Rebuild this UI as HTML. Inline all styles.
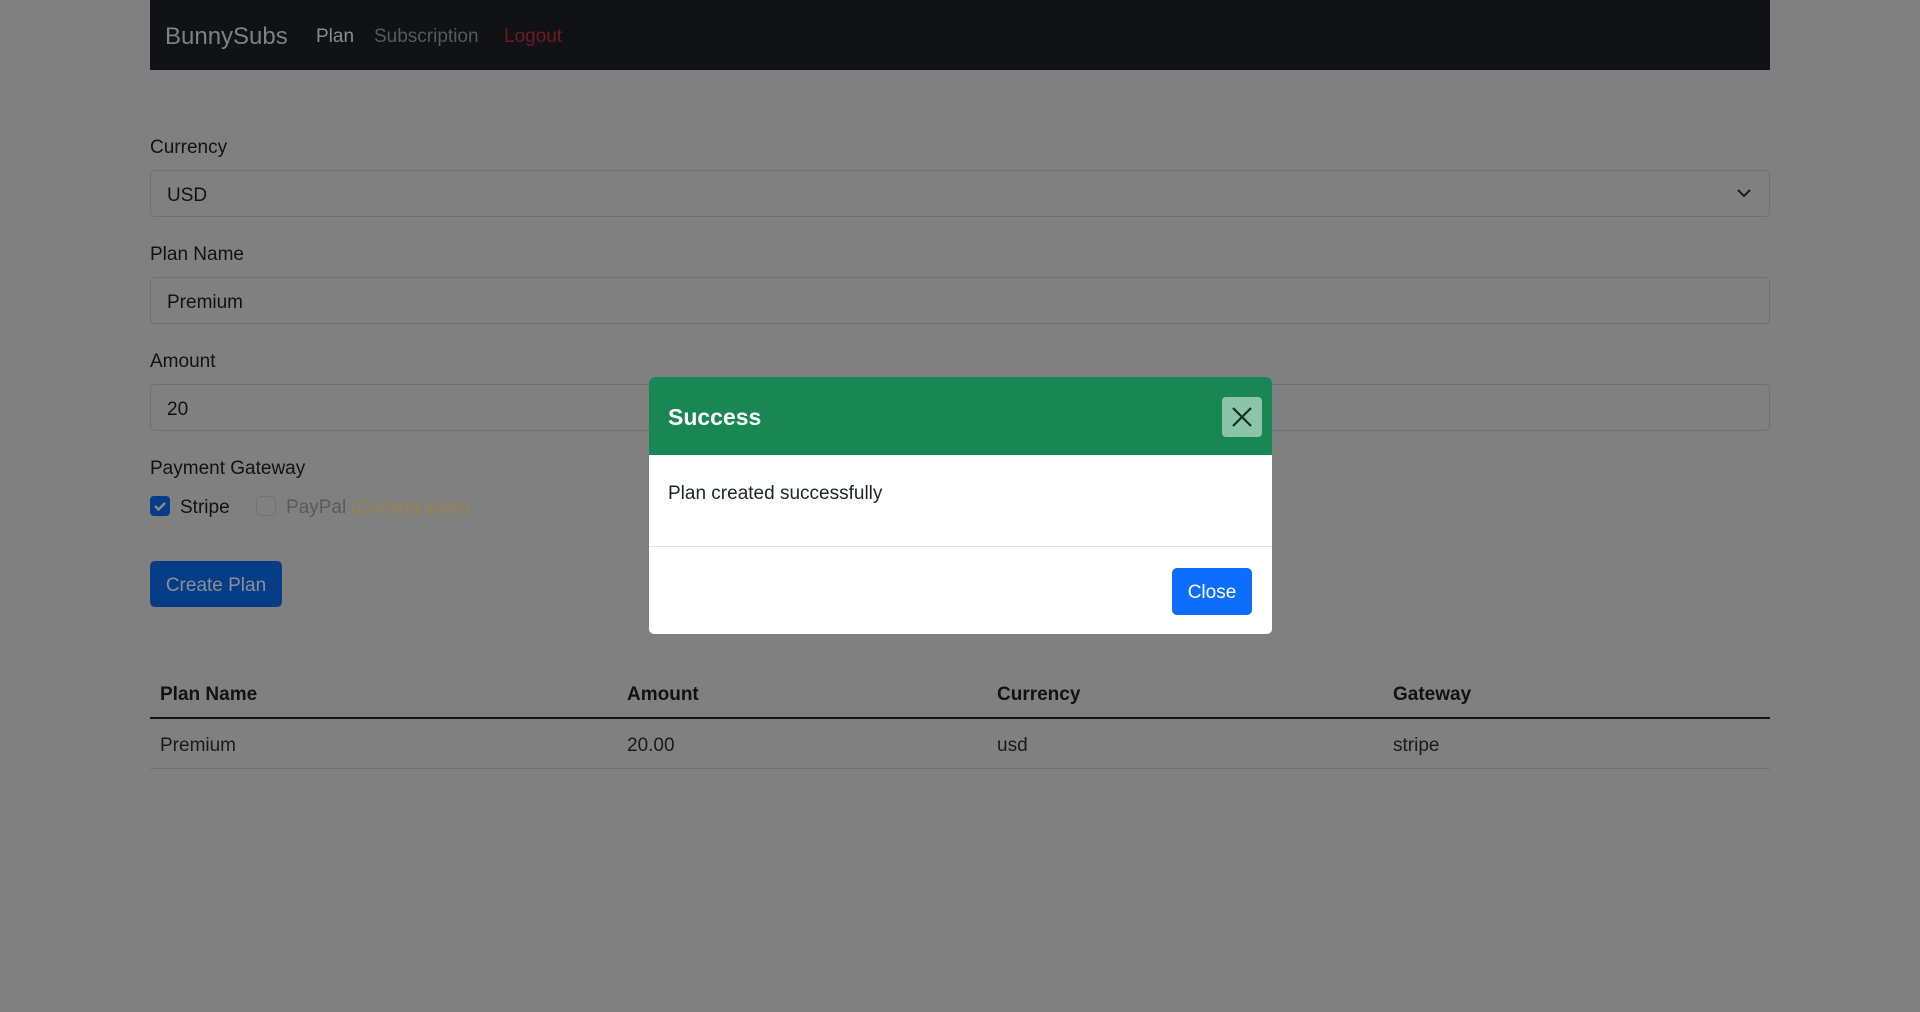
<!DOCTYPE html>
<html><head><style>
*{box-sizing:border-box;margin:0;padding:0}
body{width:1920px;height:1012px;background:#808080;font-family:"Liberation Sans",sans-serif;color:#121212;position:relative;overflow:hidden;font-size:19px}
.a{position:absolute;white-space:nowrap}
.nav{left:150px;top:0;width:1620px;height:70px;background:#111215}
.inp{left:150px;width:1620px;height:47px;border:1px solid #6e7073;border-radius:5px;padding-left:16px;line-height:49px;font-size:19px;color:#121212}
.lbl{left:150px;font-size:19px;color:#121212}
.th{font-weight:bold;top:684px}
.td{top:735px;color:#1a1a1a}
</style></head><body>
<div class="a nav"></div>
<div class="a" style="left:165px;top:23px;font-size:24px;color:#7f8081">BunnySubs</div>
<div class="a" style="left:316px;top:26px;font-size:19px;color:#8a8b8d">Plan</div>
<div class="a" style="left:374px;top:26px;font-size:19px;color:#58595b">Subscription</div>
<div class="a" style="left:504px;top:26px;font-size:19px;color:#6e1a22">Logout</div>

<div class="a lbl" style="top:137px">Currency</div>
<div class="a inp" style="top:170px">USD</div>
<svg class="a" style="left:1736px;top:186px" width="16" height="14" viewBox="0 0 16 14"><path d="M2 4l6 6 6-6" fill="none" stroke="#1a1a1a" stroke-width="2"/></svg>
<div class="a lbl" style="top:244px">Plan Name</div>
<div class="a inp" style="top:277px">Premium</div>
<div class="a lbl" style="top:351px">Amount</div>
<div class="a inp" style="top:384px">20</div>
<div class="a lbl" style="top:458px">Payment Gateway</div>
<div class="a" style="left:150px;top:496px;width:20px;height:20px;background:#073c86;border-radius:4px"></div>
<svg class="a" style="left:150px;top:496px" width="20" height="20"><path d="M5 10l3.5 3.5L15 7" fill="none" stroke="#8a8a8a" stroke-width="2.5"/></svg>
<div class="a" style="left:180px;top:497px;color:#121212">Stripe</div>
<div class="a" style="left:256px;top:496px;width:20px;height:20px;border:1px solid #747474;border-radius:4px"></div>
<div class="a" style="left:286px;top:497px;color:#5a5a5a">PayPal <span style="color:#97844a;font-size:18px">(Coming soon)</span></div>
<div class="a" style="left:150px;top:561px;width:132px;height:46px;background:#073c86;border-radius:5px;color:#8a8f99;text-align:center;line-height:49px">Create Plan</div>

<div class="a th" style="left:160px">Plan Name</div>
<div class="a th" style="left:627px">Amount</div>
<div class="a th" style="left:997px">Currency</div>
<div class="a th" style="left:1393px">Gateway</div>
<div class="a" style="left:150px;top:717px;width:1620px;height:2px;background:#121212"></div>
<div class="a td" style="left:160px">Premium</div>
<div class="a td" style="left:627px">20.00</div>
<div class="a td" style="left:997px">usd</div>
<div class="a td" style="left:1393px">stripe</div>
<div class="a" style="left:150px;top:768px;width:1620px;height:1px;background:#727272"></div>

<div class="a" style="left:649px;top:377px;width:623px;height:257px;background:#fff;border-radius:5px;overflow:hidden">
 <div style="height:78px;background:#198754;position:relative">
  <div class="a" style="left:19px;top:27px;color:#fff;font-weight:bold;font-size:23px">Success</div>
  <div class="a" style="left:573px;top:20px;width:40px;height:40px;background:#8cc4a9;border-radius:4px"></div>
  <svg class="a" style="left:573px;top:20px" width="40" height="40"><path d="M11 11l18 18M29 11L11 29" stroke="#10301f" stroke-width="2.2"/></svg>
 </div>
 <div class="a" style="left:19px;top:106px;color:#212529">Plan created successfully</div>
 <div class="a" style="left:0;top:169px;width:623px;height:1px;background:#dee2e6"></div>
 <div class="a" style="left:523px;top:191px;width:80px;height:47px;background:#0d6efd;border-radius:5px;color:#fff;text-align:center;line-height:49px">Close</div>
</div>
</body></html>
